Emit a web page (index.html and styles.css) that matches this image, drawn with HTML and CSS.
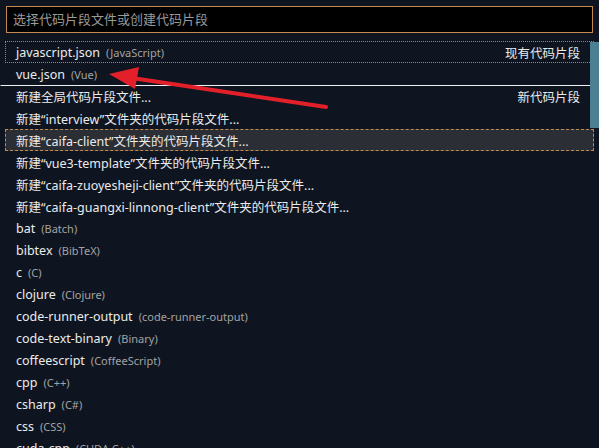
FILE: index.html
```html
<!DOCTYPE html>
<html lang="zh-CN">
<head>
<meta charset="utf-8">
<link rel="stylesheet" href="styles.css">
</head>
<body>
<div class="picker">
  <div class="input-wrap">
    <div class="input">选择代码片段文件或创建代码片段</div>
  </div>
  <div class="list">
    <div class="row dotted"><span class="label">javascript.json</span><span class="desc">(JavaScript)</span><span class="group">现有代码片段</span></div>
    <div class="row"><span class="label">vue.json</span><span class="desc">(Vue)</span></div>
    <div class="row sep"><span class="label">新建全局代码片段文件...</span><span class="group">新代码片段</span></div>
    <div class="row"><span class="label">新建“interview”文件夹的代码片段文件...</span></div>
    <div class="row focused"><span class="label">新建“caifa-client”文件夹的代码片段文件...</span></div>
    <div class="row"><span class="label">新建“vue3-template”文件夹的代码片段文件...</span></div>
    <div class="row"><span class="label">新建“caifa-zuoyesheji-client”文件夹的代码片段文件...</span></div>
    <div class="row"><span class="label">新建“caifa-guangxi-linnong-client”文件夹的代码片段文件...</span></div>
    <div class="row"><span class="label">bat</span><span class="desc">(Batch)</span></div>
    <div class="row"><span class="label">bibtex</span><span class="desc">(BibTeX)</span></div>
    <div class="row"><span class="label">c</span><span class="desc">(C)</span></div>
    <div class="row"><span class="label">clojure</span><span class="desc">(Clojure)</span></div>
    <div class="row"><span class="label">code-runner-output</span><span class="desc">(code-runner-output)</span></div>
    <div class="row"><span class="label">code-text-binary</span><span class="desc">(Binary)</span></div>
    <div class="row"><span class="label">coffeescript</span><span class="desc">(CoffeeScript)</span></div>
    <div class="row"><span class="label">cpp</span><span class="desc">(C++)</span></div>
    <div class="row"><span class="label">csharp</span><span class="desc">(C#)</span></div>
    <div class="row"><span class="label">css</span><span class="desc">(CSS)</span></div>
    <div class="row"><span class="label">cuda-cpp</span><span class="desc">(CUDA C++)</span></div>
    <div class="scrollbar"></div>
  </div>
  <svg class="arrow" width="599" height="448" viewBox="0 0 599 448">
    <line x1="326" y1="107" x2="132" y2="78" stroke="#e3202a" stroke-width="4" stroke-linecap="round"/>
    <polygon points="109,74 139,67 135,89" fill="#e3202a"/>
  </svg>
</div>
</body>
</html>
```
FILE: styles.css
```css
html, body {
  margin: 0;
  padding: 0;
  background: #0e1520;
}
body {
  width: 599px;
  height: 448px;
  overflow: hidden;
  font-family: "Noto Sans", "Noto Sans CJK SC", sans-serif;
  font-size: 12.5px;
  color: #e6e6e6;
}
.picker {
  position: relative;
  width: 599px;
  height: 448px;
}
.input-wrap {
  padding: 6px 6px 0 6px;
}
.input {
  height: 25px;
  border: 1px solid #c58a4f;
  background: #000;
  color: #9a9a9a;
  font-size: 13px;
  line-height: 25px;
  padding-left: 6px;
}
.list {
  position: relative;
  margin-top: 8px;
}
.row {
  display: flex;
  align-items: center;
  height: 22px;
  margin: 0 5px;
  padding: 0 13px 0 10px;
  box-sizing: border-box;
  white-space: nowrap;
  border: 1px solid transparent;
}
.row.dotted {
  border: 1px dotted #b57f45;
}
.row.focused {
  border: 1px dashed #c08a52;
  background: #2b2e35;
}
.row.sep {
  margin-left: 0;
  padding-left: 15px;
  border-top: 1px solid #f0f0f0;
  margin-right: 6px;
  padding-right: 12px;
}
.label {
  color: #ebebeb;
}
.desc {
  margin-left: 6px;
  font-size: 11px;
  color: #a3a3a3;
}
.group {
  margin-left: auto;
  color: #ebebeb;
}
.scrollbar {
  position: absolute;
  right: 0;
  top: 1px;
  width: 9px;
  height: 86px;
  background: #4d7f93;
}
.arrow {
  position: absolute;
  left: 0;
  top: 0;
  pointer-events: none;
}
```
